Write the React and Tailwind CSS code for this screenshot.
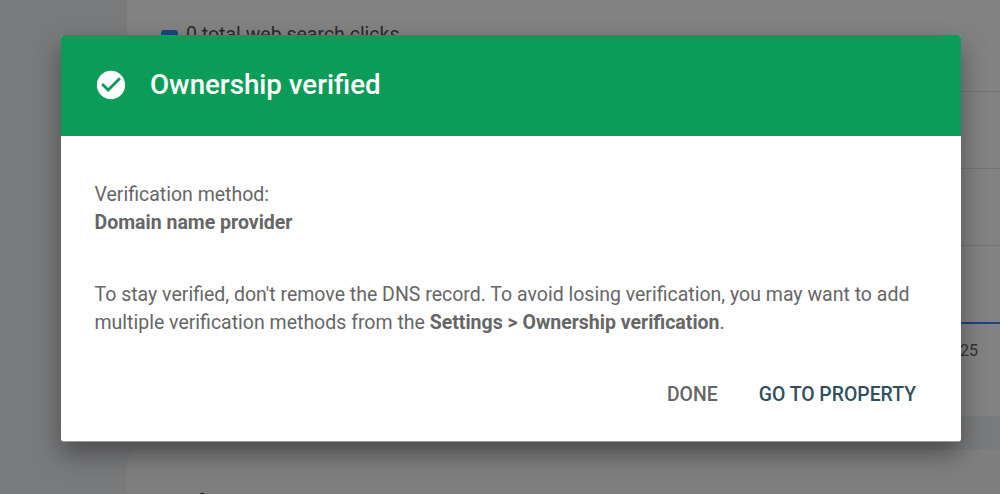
import React from "react";

function CheckCircle() {
  return (
    <svg viewBox="0 0 24 24" className="h-[34px] w-[34px]">
      <path
        fill="#fff"
        d="M12 2C6.48 2 2 6.48 2 12s4.48 10 10 10 10-4.48 10-10S17.52 2 12 2zm-2 15-5-5 1.41-1.41L10 14.17l7.59-7.59L19 8l-9 9z"
      />
    </svg>
  );
}

function Backdrop() {
  return (
    <div className="flex h-[494px] w-[1000px] bg-[#797a7c]">
      <aside className="w-[127px] shrink-0" />
      <main className="flex min-w-0 flex-1 flex-col">
        <section className="h-[416px] bg-[#828282] pl-[34px]">
          <div className="flex items-center gap-[8px] pt-[23px] text-[19.5px] leading-6 text-[#2a2a2a]">
            <span className="mt-[6px] h-[17px] w-[17px] rounded-[3px] bg-[#1d4486]" />
            0 total web search clicks
          </div>
          <div className="mt-[44px] h-px bg-[#747474]" />
          <div className="mt-[76px] h-px bg-[#747474]" />
          <div className="mt-[76px] h-px bg-[#747474]" />
          <div className="mt-[76px] h-[2px] bg-[#1d4486]" />
          <div className="pt-[17px] pr-[22px] text-right text-[16px] leading-5 text-[#333]">25</div>
        </section>
        <section className="mt-[34px] flex-1 overflow-hidden rounded-tl-xl bg-[#7f7f7f] pl-[34px] pt-[35px] text-[32px] font-medium leading-10 text-[#1c1c1c]">
          Indexing
        </section>
      </main>
    </div>
  );
}

export default function App() {
  return (
    <div className="relative h-[494px] w-[1000px] overflow-hidden font-['Roboto',sans-serif]">
      <Backdrop />
      <div className="absolute left-[61px] top-[35px] flex h-[407px] w-[900px] flex-col overflow-hidden rounded-[3px] border-b border-[#9a9a9a] bg-white shadow-[0_12px_26px_rgba(0,0,0,0.38)]">
        <header className="flex h-[101px] items-center gap-[22px] bg-[#0b9d58] pl-[33px] pb-[2px]">
          <CheckCircle />
          <h1 className="text-[27.7px] font-medium leading-8 text-white">Ownership verified</h1>
        </header>
        <div className="flex flex-1 flex-col pl-[33.5px] pr-[34px] pt-[45px] text-[19.5px] leading-7 text-[#666]">
          <p>
            Verification method:
            <br />
            <b className="font-bold">Domain name provider</b>
          </p>
          <p className="mt-[44px]">
            To stay verified, don't remove the DNS record. To avoid losing verification, you may want to add
            <br />
            multiple verification methods from the <b className="font-bold">Settings &gt; Ownership verification</b>.
          </p>
          <div className="mt-[46px] flex justify-end gap-[41px] pr-[11px] text-[19.4px] font-medium leading-6">
            <button className="text-[#666]">DONE</button>
            <button className="text-[#2f4f5f]">GO TO PROPERTY</button>
          </div>
        </div>
      </div>
    </div>
  );
}
